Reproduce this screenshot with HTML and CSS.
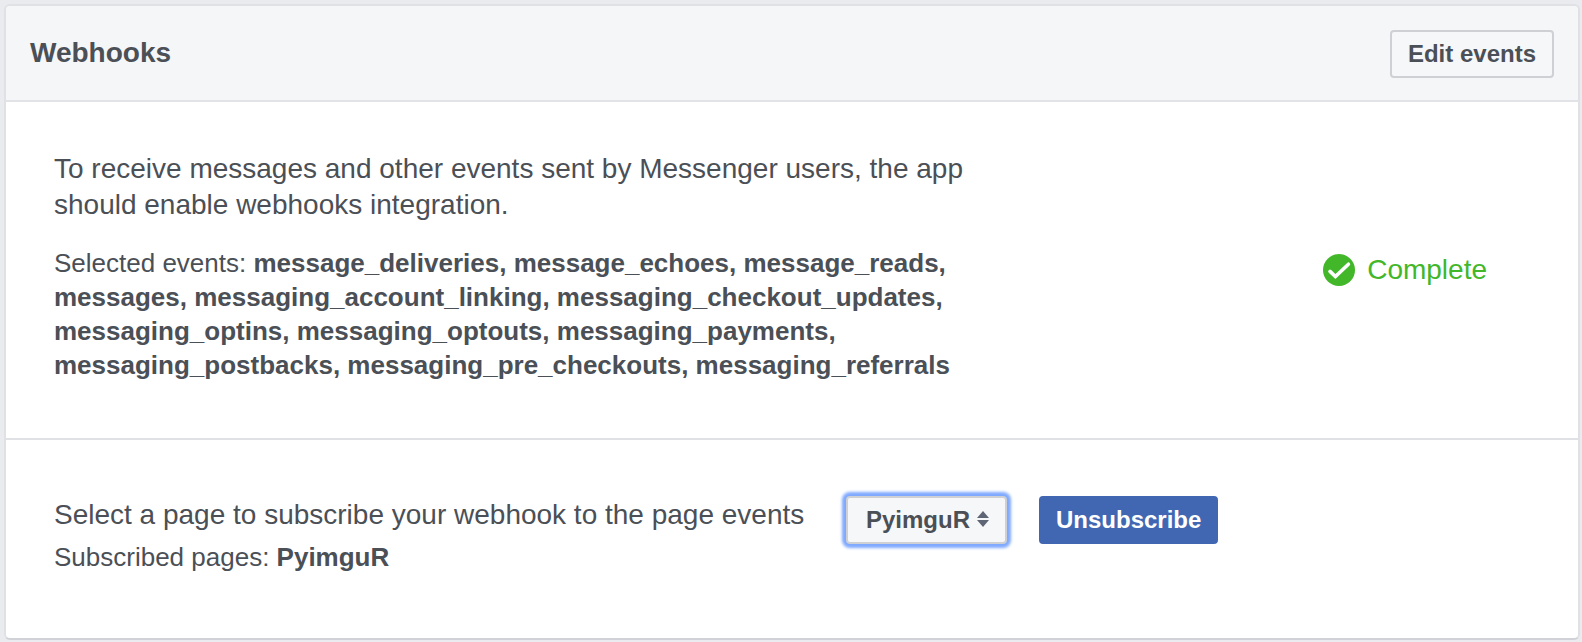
FILE: index.html
```html
<!DOCTYPE html>
<html lang="en">
<head>
<meta charset="utf-8">
<meta name="viewport" content="width=device-width, initial-scale=1">
<title>Webhooks</title>
<link rel="stylesheet" href="styles.css">
</head>
<body>
<main class="card">
  <header class="card-header">
    <h1 class="card-title">Webhooks</h1>
    <button class="button" type="button">Edit events</button>
  </header>
  <section class="integration">
    <div class="integration-text">
      <p class="lead">To receive messages and other events sent by Messenger users, the app should enable webhooks integration.</p>
      <p class="detail">Selected events: <strong>message_deliveries, message_echoes, message_reads, messages, messaging_account_linking, messaging_checkout_updates, messaging_optins, messaging_optouts, messaging_payments, messaging_postbacks, messaging_pre_checkouts, messaging_referrals</strong></p>
    </div>
    <div class="status">
      <svg class="status-icon" viewBox="0 0 32 32" aria-hidden="true">
        <circle cx="16" cy="16" r="16" fill="#42b72a"/>
        <path d="M7 17.4 12.4 22.6 25.4 10.2" fill="none" stroke="#fff" stroke-width="3.6" stroke-linecap="round" stroke-linejoin="miter"/>
      </svg>
      <span>Complete</span>
    </div>
  </section>
  <section class="subscription">
    <div class="subscription-text">
      <label class="lead" for="page">Select a page to subscribe your webhook to the page events</label>
      <p class="detail">Subscribed pages: <strong>PyimguR</strong></p>
    </div>
    <div class="select-wrap">
      <select class="button select" id="page">
        <option>PyimguR</option>
      </select>
      <svg class="select-arrows" viewBox="0 0 12 16" aria-hidden="true">
        <path d="M0 7 6 0l6 7zM0 9h12l-6 7z" fill="#5e6675"/>
      </svg>
    </div>
    <button class="button button-primary" type="button">Unsubscribe</button>
  </section>
</main>
</body>
</html>
```

FILE: styles.css
```css
* {
  box-sizing: border-box;
}

body {
  margin: 0;
  padding: 4px 2px 2px 4px;
  background: #e9ebee;
  color: #4b4f56;
  font-family: "Liberation Sans", Arial, sans-serif;
}

.card {
  background: #fff;
  border: 2px solid #dfe1e5;
  border-bottom-color: #d0d2d7;
  border-radius: 6px;
}

.card-header {
  display: flex;
  justify-content: space-between;
  align-items: flex-start;
  padding: 24px 24px 22px;
  background: #f5f6f8;
  border-bottom: 2px solid #e1e3e6;
  border-radius: 4px 4px 0 0;
}

.card-title {
  margin: 0;
  font-size: 28px;
  line-height: 46px;
}

.button {
  height: 48px;
  padding: 0 16px;
  border: 2px solid #ced0d4;
  border-radius: 4px;
  background: #f6f7f9;
  color: #4b4f56;
  font-family: inherit;
  font-size: 24px;
  font-weight: bold;
  line-height: 44px;
}

.button-primary {
  padding: 0 15px;
  border-color: #4267b2;
  background: #4267b2;
  color: #fff;
}

.integration {
  display: flex;
  align-items: center;
  justify-content: space-between;
  border-bottom: 2px solid #dfe1e5;
}

.integration-text {
  max-width: 1008px;
  padding: 49px 48px 56px;
}

.lead,
.detail {
  margin: 0;
}

.lead {
  font-size: 28px;
  line-height: 36px;
}

.detail {
  font-size: 26px;
  line-height: 34px;
}

.integration .detail {
  margin-top: 23px;
}

.status {
  display: flex;
  flex: 0 0 22%;
  align-items: center;
  justify-content: center;
  gap: 12px;
  color: #42b72a;
  font-size: 28px;
  line-height: 36px;
}

.status-icon {
  width: 32px;
  height: 32px;
}

.subscription {
  display: flex;
  align-items: flex-start;
  gap: 32px;
  padding: 56px 48px 64px;
}

.subscription-text {
  display: grid;
  flex: 0 1 760px;
  gap: 6px;
}

.subscription .lead {
  line-height: 38px;
}

.select-wrap {
  position: relative;
}

.select {
  appearance: none;
  padding: 0 34px 0 18px;
  box-shadow: 0 0 3px 4px #7fa9ff;
}

.select-arrows {
  position: absolute;
  top: 15px;
  right: 18px;
  width: 12px;
  height: 16px;
  pointer-events: none;
}
```
